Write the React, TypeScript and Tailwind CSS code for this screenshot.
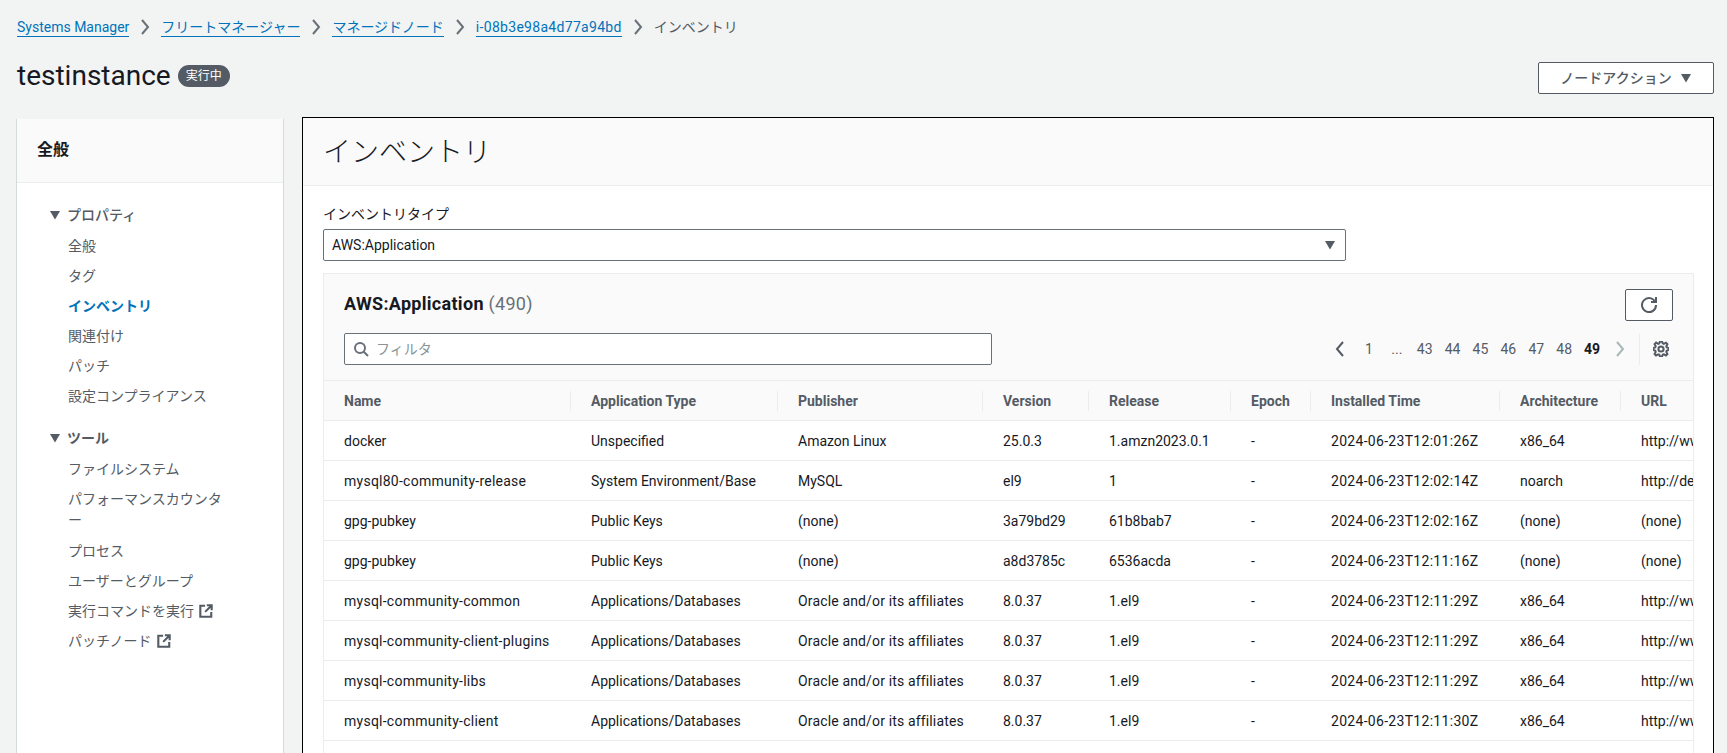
import { Fragment } from 'react';

const FONT = "font-['Roboto','Noto_Sans_CJK_JP',sans-serif]";

const crumbs = ['Systems Manager', 'フリートマネージャー', 'マネージドノード', 'i-08b3e98a4d77a94bd'];

const columns = [
  { name: 'Name', width: 'w-[247px]' },
  { name: 'Application Type', width: 'w-[207px]' },
  { name: 'Publisher', width: 'w-[205px]' },
  { name: 'Version', width: 'w-[106px]' },
  { name: 'Release', width: 'w-[142px]' },
  { name: 'Epoch', width: 'w-[80px]' },
  { name: 'Installed Time', width: 'w-[189px]' },
  { name: 'Architecture', width: 'w-[121px]' },
  { name: 'URL', width: 'w-[300px]' },
];

const rows = [
  ['docker', 'Unspecified', 'Amazon Linux', '25.0.3', '1.amzn2023.0.1', '-', '2024-06-23T12:01:26Z', 'x86_64', 'http://www.docker.com'],
  ['mysql80-community-release', 'System Environment/Base', 'MySQL', 'el9', '1', '-', '2024-06-23T12:02:14Z', 'noarch', 'http://dev.mysql.com'],
  ['gpg-pubkey', 'Public Keys', '(none)', '3a79bd29', '61b8bab7', '-', '2024-06-23T12:02:16Z', '(none)', '(none)'],
  ['gpg-pubkey', 'Public Keys', '(none)', 'a8d3785c', '6536acda', '-', '2024-06-23T12:11:16Z', '(none)', '(none)'],
  ['mysql-community-common', 'Applications/Databases', 'Oracle and/or its affiliates', '8.0.37', '1.el9', '-', '2024-06-23T12:11:29Z', 'x86_64', 'http://www.mysql.com'],
  ['mysql-community-client-plugins', 'Applications/Databases', 'Oracle and/or its affiliates', '8.0.37', '1.el9', '-', '2024-06-23T12:11:29Z', 'x86_64', 'http://www.mysql.com'],
  ['mysql-community-libs', 'Applications/Databases', 'Oracle and/or its affiliates', '8.0.37', '1.el9', '-', '2024-06-23T12:11:29Z', 'x86_64', 'http://www.mysql.com'],
  ['mysql-community-client', 'Applications/Databases', 'Oracle and/or its affiliates', '8.0.37', '1.el9', '-', '2024-06-23T12:11:30Z', 'x86_64', 'http://www.mysql.com'],
];

const cellTracking = (cell: string, col: number) => {
  if (col === 6) return 'tracking-[0.3px]';
  if (col === 0 && cell.startsWith('mysql')) return 'tracking-[0.25px]';
  if (col === 2 && cell.startsWith('Oracle')) return 'tracking-[0.15px]';
  return '';
};

function Caret({ className = '' }: { className?: string }) {
  return (
    <svg viewBox="0 0 12 10" className={`h-[10px] w-[12px] fill-[#545b64] ${className}`}>
      <path d="M1 1h10L6 9.5z" />
    </svg>
  );
}

function Chevron({ left = false, className = '' }: { left?: boolean; className?: string }) {
  return (
    <svg viewBox="0 0 10 16" className={`h-4 w-[10px] fill-none stroke-2 ${className}`}>
      <path d={left ? 'M8 1 2 8l6 7' : 'M2 1l6 7-6 7'} />
    </svg>
  );
}

function ExternalIcon() {
  return (
    <svg viewBox="0 0 16 16" className="ml-[5px] h-[14px] w-[14px] fill-none stroke-[#545b64] stroke-[2.4]">
      <path d="M7 2H1.5v12.5H14V9" />
      <path d="M9 1.5h5.5V7M14 2 7 9" />
    </svg>
  );
}

function NavItem({ children, active = false }: { children: React.ReactNode; active?: boolean }) {
  return (
    <div className={`flex h-[30px] items-center pl-[51px] ${active ? 'font-bold text-[#0073bb]' : 'text-[#545b64]'}`}>
      {children}
    </div>
  );
}

function NavGroup({ title, bold = false }: { title: string; bold?: boolean }) {
  return (
    <div className={`flex h-[31px] items-center pb-px pl-[32px] text-[#545b64] ${bold ? 'font-bold' : 'font-medium'}`}>
      <Caret className="mr-[6px]" />
      {title}
    </div>
  );
}

function Sidebar() {
  return (
    <aside className="mt-[2px] w-[268px] shrink-0 border-x border-[#d5dbdb] bg-white">
      <div className="flex h-[64px] items-center border-b border-[#eaeded] bg-[#fafafa] pb-[2px] pl-5 text-base font-bold text-[#16191f]">
        全般
      </div>
      <nav className="pt-[17px]">
        <NavGroup title="プロパティ" />
        <NavItem>全般</NavItem>
        <NavItem>タグ</NavItem>
        <NavItem active>インベントリ</NavItem>
        <NavItem>関連付け</NavItem>
        <NavItem>パッチ</NavItem>
        <NavItem>設定コンプライアンス</NavItem>
        <div className="h-3" />
        <NavGroup title="ツール" bold />
        <NavItem>ファイルシステム</NavItem>
        <div className="py-[5px] pl-[51px] leading-[21px] text-[#545b64]">
          パフォーマンスカウンタ
          <br />ー
        </div>
        <NavItem>プロセス</NavItem>
        <NavItem>ユーザーとグループ</NavItem>
        <NavItem>
          実行コマンドを実行
          <ExternalIcon />
        </NavItem>
        <NavItem>
          パッチノード
          <ExternalIcon />
        </NavItem>
      </nav>
    </aside>
  );
}

function Pagination() {
  const pages = ['1', '...', '43', '44', '45', '46', '47', '48'];
  return (
    <div className="mr-1 flex h-[31px] items-center text-[#545b64]">
      <Chevron left className="mr-[10px] stroke-[#545b64]" />
      {pages.map((page) => (
        <span key={page} className="w-[27.9px] text-center">
          {page}
        </span>
      ))}
      <span className="w-[27.9px] text-center font-bold text-[#16191f]">49</span>
      <Chevron className="ml-[9px] stroke-[#aab7b8]" />
      <div className="ml-[14px] h-full border-l border-[#eaeded]" />
      <svg viewBox="0 0 16 16" className="ml-[13px] h-4 w-4 fill-none stroke-[#545b64] stroke-2">
        <path d="M13.3 5.2l1.1-2.1L13 1.7l-2.1 1.1c-.3-.2-.7-.3-1.1-.4L9 .5H7l-.8 1.9c-.3.1-.7.2-1 .4L3.1 1.6 1.6 3.1l1.1 2.1c-.2.3-.3.7-.4 1L.5 7v2l1.8.8c.1.4.3.7.4 1.1l-1.1 2.1 1.4 1.4 2.1-1.1c.3.2.7.3 1.1.4L7 15.5h2l.8-1.8c.4-.1.7-.3 1.1-.4l2.1 1.1 1.4-1.4-1.1-2.1c.2-.3.3-.7.4-1.1l1.8-.8V7l-1.8-.8c-.1-.3-.2-.7-.4-1z" />
        <circle cx="8" cy="8" r="2.6" />
      </svg>
    </div>
  );
}

function InventoryTable() {
  return (
    <section className="mt-3 mr-[19px] ml-5 overflow-hidden border border-[#eaeded] bg-[#fafafa]">
      <div className="px-5 pt-[15px]">
        <div className="flex items-start justify-between">
          <h2 className="mt-1 text-lg leading-[22px] font-bold tracking-[0.3px] text-[#16191f]">
            AWS:Application <span className="font-normal text-[#687078]">(490)</span>
          </h2>
          <button className="flex h-8 w-[48px] items-center justify-center rounded-[2px] border border-[#545b64] bg-white">
            <svg viewBox="0 0 16 16" className="h-4 w-4 fill-none stroke-[#545b64] stroke-2">
              <path d="M10 5h5V0" />
              <path d="M15 8a7 7 0 1 1-.7-3" />
            </svg>
          </button>
        </div>
        <div className="mt-3 flex items-center justify-between pb-[15px]">
          <div className="flex h-8 w-[648px] items-center rounded-[2px] border border-[#687078] bg-white pl-2">
            <svg viewBox="0 0 16 16" className="h-4 w-4 fill-none stroke-[#687078] stroke-2">
              <circle cx="7" cy="7" r="5" />
              <path d="m15 15-4.5-4.5" />
            </svg>
            <span className="ml-[7px] text-[#879596]">フィルタ</span>
          </div>
          <Pagination />
        </div>
      </div>
      <table className="w-[1597px] table-fixed border-collapse">
        <colgroup>
          {columns.map((col) => (
            <col key={col.name} className={col.width} />
          ))}
        </colgroup>
        <thead>
          <tr className="h-[40px] border-y border-[#eaeded] bg-[#fafafa]">
            {columns.map((col, i) => (
              <th key={col.name} className="p-0 text-left font-bold text-[#545b64]">
                <div className={`flex h-5 items-center pl-5 ${i === columns.length - 1 ? '' : 'border-r border-[#eaeded]'}`}>
                  {col.name}
                </div>
              </th>
            ))}
          </tr>
        </thead>
        <tbody className="bg-white">
          {rows.map((row, r) => (
            <tr key={r} className="h-[40px] border-b border-[#eaeded]">
              {row.map((cell, c) => (
                <td key={c} className={`truncate py-0 pr-0 pl-5 text-[#16191f] ${cellTracking(cell, c)}`}>
                  {cell}
                </td>
              ))}
            </tr>
          ))}
          <tr className="h-[40px]">
            <td colSpan={9} />
          </tr>
        </tbody>
      </table>
    </section>
  );
}

export default function App() {
  return (
    <div className={`h-[753px] overflow-hidden bg-[#f2f3f3] pr-[13px] pl-4 text-sm ${FONT}`}>
      <div className="ml-px flex h-[54px] items-center text-[#545b64]">
        {crumbs.map((crumb, i) => (
          <Fragment key={crumb}>
            <a className={`border-b border-[#0073bb] leading-[18px] text-[#0073bb] ${i === 3 ? 'tracking-[0.3px]' : ''}`}>{crumb}</a>
            <Chevron className="mx-[11px] stroke-[#687078]" />
          </Fragment>
        ))}
        <span>インベントリ</span>
      </div>
      <div className="flex h-[63px] items-start justify-between">
        <div className="mt-[3px] ml-px flex items-center">
          <h1 className="text-[28px] leading-[38px] text-[#16191f]">testinstance</h1>
          <span className="ml-[7px] rounded-full bg-[#545b64] px-2 text-xs leading-[22px] text-white">実行中</span>
        </div>
        <button className="mt-[8px] flex h-8 w-[176px] items-center justify-center gap-2 rounded-[2px] border border-[#545b64] bg-white font-medium text-[#545b64]">
          ノードアクション
          <Caret />
        </button>
      </div>
      <div className="flex h-[700px] gap-[18px]">
        <Sidebar />
        <main className="min-w-0 flex-1 border-x border-t border-black bg-white">
          <div className="flex h-[68px] items-center border-b border-[#eaeded] bg-[#fafafa] pt-[2px] pl-5 text-[28px] font-light text-[#16191f]">
            インベントリ
          </div>
          <div className="pt-[19px] pr-[19px] pl-5">
            <div className="leading-[18px] text-[#16191f]">インベントリタイプ</div>
            <div className="mt-[6px] flex h-[32px] w-[1023px] items-center justify-between rounded-[2px] border border-[#687078] bg-white pr-[9px] pl-2 text-[#16191f]">
              AWS:Application
              <Caret />
            </div>
          </div>
          <InventoryTable />
        </main>
      </div>
    </div>
  );
}
